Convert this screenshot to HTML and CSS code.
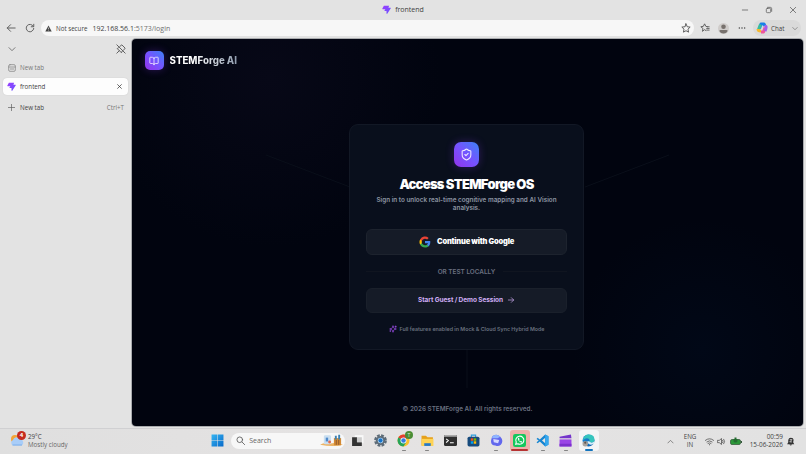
FILE: index.html
```html
<!DOCTYPE html>
<html lang="en">
<head>
    <meta charset="UTF-8" />
    <meta name="viewport" content="width=device-width, initial-scale=1.0"/>
    <title>frontend</title>
    <link rel="stylesheet" href="styles.css">
</head>
<body>
    <svg width="0" height="0" class="defs">
        <defs>
            <linearGradient id="bolt" x1="0" y1="0" x2="1" y2="1"><stop offset="0" stop-color="#9b3dff"/><stop offset="1" stop-color="#6a55ff"/></linearGradient>
            <linearGradient id="win" x1="0" y1="0" x2="1" y2="1"><stop offset="0" stop-color="#35b5f2"/><stop offset="1" stop-color="#0869c9"/></linearGradient>
            <linearGradient id="edge" x1="0" y1="0" x2="1" y2="1"><stop offset="0" stop-color="#1b8fe0"/><stop offset="1" stop-color="#0d5ba8"/></linearGradient>
            <symbol id="logo" viewBox="0 0 24 24"><path fill="url(#bolt)" d="M5 2h14l-2 5h6q1 1 0 2L14 23h-2v-7H7q-1-1 0-2l2-3H2q-2-1-1-2z"/></symbol>
        </defs>
    </svg>

    <header class="titlebar">
        <div class="title"><svg class="i9"><use href="#logo"/></svg><span>frontend</span></div>
        <div class="window-buttons">
            <svg class="i8 line" viewBox="0 0 24 24"><path d="M4 12h16"/></svg>
            <svg class="i8 line" viewBox="0 0 24 24"><rect x="4" y="7" width="13" height="13" rx="3"/><path d="M8 4h8q4 0 4 4v8"/></svg>
            <svg class="i8 line" viewBox="0 0 24 24"><path d="M4 4l16 16M20 4L4 20"/></svg>
        </div>
    </header>

    <nav class="toolbar">
        <svg class="i10 line back" viewBox="0 0 24 24"><path d="M22 12H3M11 4l-8 8 8 8"/></svg>
        <svg class="i10 line reload" viewBox="0 0 24 24"><path d="M20 8a9 9 0 1 0 1 5M21 3v6h-6"/></svg>
        <div class="address">
            <svg class="warn" viewBox="0 0 24 24"><path fill="#444" d="M12 2l11 20H1z"/><path stroke="#f7f7f7" stroke-width="2" d="M12 9v6M12 17v2"/></svg>
            <span class="secure">Not secure</span>
            <span class="url">192.168.56.1<em>:5173/login</em></span>
            <svg class="i10 line star" viewBox="0 0 24 24"><path d="M12 2l3 7 7 .8-5.300 5 1.500 7.200L12 18.500 5.800 22l1.500-7.200L2 9.800 9 9z"/></svg>
        </div>
        <svg class="i10 line fav" viewBox="0 0 24 24"><path d="M14 18l-3-2-5 4 1-7-5-4 6-1 3-6 3 6 4 1M16 13h6M16 17h6M18 9h4"/></svg>
        <svg class="avatar" viewBox="0 0 24 24"><circle cx="12" cy="12" r="12" fill="#cfccca"/><circle cx="12" cy="8" r="5" fill="#77716d"/><path d="M3 17q0-2 3-2h12q3 0 3 2-2 6-9 6t-9-6" fill="#77716d"/></svg>
        <svg class="dots" viewBox="0 0 24 24"><g fill="#444"><circle cx="4" cy="12" r="2.200"/><circle cx="12" cy="12" r="2.200"/><circle cx="20" cy="12" r="2.200"/></g></svg>
        <div class="chat">
            <svg class="i12" viewBox="0 0 24 24" fill="none" stroke-width="6" stroke-linejoin="round"><path stroke="#187fe7" d="M7 13l3-9h6l2 4"/><path stroke="#36bd9d" d="M9 5L5 15"/><path stroke="#f5b82e" d="M4 14q0 4 6 4"/><path stroke="#f0569a" d="M10 20h5l3-9"/><path stroke="#a45bea" d="M17 9h3q1 3-2 9"/></svg>
            <span>Chat</span>
            <svg class="i7 line" viewBox="0 0 24 24"><path d="M3 8l9 9 9-9"/></svg>
        </div>
    </nav>

    <main class="browser">
        <aside class="tabs">
            <div class="tabs-head">
                <svg class="i8 line" viewBox="0 0 24 24"><path d="M3 8l9 9 9-9"/></svg>
                <svg class="i10 line" viewBox="0 0 24 24"><path d="M2 2l20 20M2 22l6-6M9 6l5-4 8 8-4 5M6 9l-3 2 10 10 2-4"/></svg>
            </div>
            <div class="tab muted">
                <svg class="i8 line" viewBox="0 0 24 24"><rect x="2" y="2" width="20" height="20" rx="4"/><path d="M2 9h20M7 15h10"/></svg>
                <span>New tab</span>
            </div>
            <div class="tab active">
                <svg class="i9"><use href="#logo"/></svg>
                <span>frontend</span>
                <svg class="close line" viewBox="0 0 24 24"><path d="M3 3l18 18M21 3L3 21"/></svg>
            </div>
            <div class="tab new">
                <svg class="i7 line" viewBox="0 0 24 24"><path d="M12 1v22M1 12h22"/></svg>
                <span>New tab</span>
                <small>Ctrl+T</small>
            </div>
        </aside>

        <section class="page">
            <svg class="lines" viewBox="0 0 671 387"><path d="M134 116l84 32M537 116l-84 32M335 311v38"/></svg>
            <div class="brand">
                <div class="badge"><svg class="i10 lucide" viewBox="0 0 24 24"><path d="M12 7v14M3 18a1 1 0 0 1-1-1V4a1 1 0 0 1 1-1h5a4 4 0 0 1 4 4 4 4 0 0 1 4-4h5a1 1 0 0 1 1 1v13a1 1 0 0 1-1 1h-6a3 3 0 0 0-3 3 3 3 0 0 0-3-3z"/></svg></div>
                <span>STEMForge AI</span>
            </div>

            <div class="card">
                <div class="badge large"><svg class="i13 lucide" viewBox="0 0 24 24"><path d="M20 13c0 5-3.500 7.500-7.660 8.950a1 1 0 0 1-.67-.01C7.500 20.500 4 18 4 13V6a1 1 0 0 1 1-1c2 0 4.500-1.200 6.240-2.720a1.170 1.170 0 0 1 1.520 0C14.510 3.810 17 5 19 5a1 1 0 0 1 1 1z"/><path d="m9 12 2 2 4-4"/></svg></div>
                <h1>Access STEMForge OS</h1>
                <p class="lead">Sign in to unlock real-time cognitive mapping and AI Vision<br>analysis.</p>
                <button class="google">
                    <svg class="i10g" viewBox="0 0 24 24"><path fill="#4285f4" d="M22.560 12.250c0-.78-.07-1.530-.2-2.250H12v4.260h5.920a5.060 5.060 0 0 1-2.200 3.320v2.770h3.570c2.080-1.920 3.270-4.740 3.270-8.100z"/><path fill="#34a853" d="M12 23c2.970 0 5.460-.98 7.280-2.660l-3.570-2.770c-.98.66-2.230 1.060-3.710 1.060-2.860 0-5.290-1.930-6.160-4.530H2.180v2.840A11 11 0 0 0 12 23z"/><path fill="#fbbc05" d="M5.840 14.090a6.600 6.600 0 0 1 0-4.180V7.070H2.180a11 11 0 0 0 0 9.860z"/><path fill="#ea4335" d="M12 5.380c1.620 0 3.060.56 4.210 1.640l3.150-3.150A11 11 0 0 0 2.180 7.070l3.660 2.840C6.710 7.310 9.140 5.380 12 5.380z"/></svg>
                    <span>Continue with Google</span>
                </button>
                <div class="divider"><span>OR TEST LOCALLY</span></div>
                <button class="guest">
                    <span>Start Guest / Demo Session</span>
                    <svg class="i8 lucide" viewBox="0 0 24 24"><path d="M4 12h16M13 5l7 7-7 7"/></svg>
                </button>
                <div class="hint">
                    <svg class="i8 lucide" viewBox="0 0 24 24"><path d="M9.940 15.500A2 2 0 0 0 8.500 14.060l-6.140-1.580a.5.5 0 0 1 0-.96L8.500 9.940A2 2 0 0 0 9.940 8.500l1.580-6.140a.5.5 0 0 1 .96 0L14.060 8.500a2 2 0 0 0 1.440 1.440l6.140 1.580a.5.5 0 0 1 0 .96L15.500 14.060a2 2 0 0 0-1.440 1.440l-1.580 6.140a.5.5 0 0 1-.96 0z"/><path d="M20 3v4M22 5h-4M4 17v2M5 18H3"/></svg>
                    <span>Full features enabled in Mock &amp; Cloud Sync Hybrid Mode</span>
                </div>
            </div>

            <footer>© 2026 STEMForge AI. All rights reserved.</footer>
        </section>
    </main>

    <div class="taskbar">
        <div class="weather">
            <svg class="cloud" viewBox="0 0 30 30"><circle cx="10" cy="14" r="8" fill="#f3a536"/><path d="M6 27a6 6 0 0 1 0-11 7 7 0 0 1 13-2 7 7 0 0 1 4 13z" fill="#a9cdf8"/><path d="M5 26h19" stroke="#7caeea" stroke-width="2"/></svg>
            <b class="count">4</b>
            <div><div class="temp">29°C</div><div class="sky">Mostly cloudy</div></div>
        </div>

        <div class="apps">
            <div class="app"><svg viewBox="0 0 24 24"><path fill="url(#win)" d="M1 1h10.500v10.500H1zM12.500 1H23v10.500H12.500zM1 12.500h10.500V23H1zM12.500 12.500H23V23H12.500z"/></svg></div>
            <div class="search">
                <svg class="i9 line" viewBox="0 0 24 24"><circle cx="10" cy="10" r="7.500"/><path d="M16 16l7 7"/></svg>
                <span>Search</span>
                <svg class="art" viewBox="0 0 48 26"><path d="M0 22q10-6 20-2 14-4 28 2-20 5-48 0" fill="#edb363"/><rect x="8" y="2" width="15" height="19" rx="3" fill="#c9def0"/><path d="M12 7h5v8h-5z" fill="#4f8acb"/><circle cx="20" cy="16" r="3" fill="#e46a4c"/><path d="M29 8h15v15H29z" fill="#d38a34"/><path d="M31 3h4v8h-4zM38 1h4v10h-4z" fill="#3d81b2"/><path d="M34 12v10M39 12v10" stroke="#8f5930" stroke-width="2"/></svg>
            </div>
            <div class="app"><svg viewBox="0 0 24 24"><rect x="7" y="2" width="16" height="15" fill="#f8f8f8"/><path d="M2 6h9v9h9v7H2z" fill="#333"/><path d="M11 6h9v9h-9z" fill="#ccc"/></svg></div>
            <div class="app"><svg viewBox="0 0 24 24"><circle cx="12" cy="12" r="9.500" fill="none" stroke="#5d6b77" stroke-width="4.500" stroke-dasharray="5 2.460"/><circle cx="12" cy="12" r="8.500" fill="#5d6b77"/><circle cx="12" cy="12" r="5" fill="#cce8fc"/><circle cx="12" cy="12" r="4" fill="#1874c9"/></svg></div>
            <div class="app run"><svg viewBox="0 0 24 24"><circle cx="12" cy="12" r="11" fill="#fbc02d"/><path d="M12 12L2.500 6.500A11 11 0 0 1 21.500 6.500z" fill="#e33e32"/><path d="M12 12L2.500 6.500A11 11 0 0 0 12 23l5-8z" fill="#25a45a"/><circle cx="12" cy="12" r="5.500" fill="#fff"/><circle cx="12" cy="12" r="4.200" fill="#347ce0"/></svg><b class="profile">T</b></div>
            <div class="app run"><svg viewBox="0 0 24 24"><path d="M1 3h8l3 3h10v15H1z" fill="#e6a11b"/><path d="M1 9h22v13H1z" fill="#ffd354"/><path d="M6 17h12v5H6z" fill="#2578ca"/></svg></div>
            <div class="app"><svg viewBox="0 0 24 24"><rect x="0" y="2" width="24" height="20" rx="2" fill="#303030"/><path d="M0 5V4q0-2 2-2h20q2 0 2 2v1z" fill="#aaa"/><path d="M4 9l4 3-4 4M11 16h7" fill="none" stroke="#fff" stroke-width="2"/></svg></div>
            <div class="app"><svg viewBox="0 0 24 24"><path d="M8 6V2h8v4" fill="none" stroke="#2b9ddd" stroke-width="2"/><rect x="1" y="5" width="22" height="18" rx="3" fill="#174a7c"/><path d="M7 8h4.500v4.500H7z" fill="#f25022"/><path d="M12.500 8H17v4.500h-4.500z" fill="#7fba00"/><path d="M7 13.500h4.500V18H7z" fill="#00a4ef"/><path d="M12.500 13.500H17V18h-4.500z" fill="#ffb900"/></svg></div>
            <div class="app run"><svg viewBox="0 0 24 24"><path d="M4 4q8-6 15 1 7 7 1 15-5 4-10 1Q1 21 2 12z" fill="#6267ed"/><path d="M4 4q8-6 15 1l-5 3H4z" fill="#8fb5ff"/><path d="M6 9l11 2-2 6-8-2z" fill="#d5d8ff"/></svg></div>
            <div class="app alert"><svg viewBox="0 0 24 24"><rect width="24" height="24" rx="4" fill="#16c75c"/><path d="M5 19l1-4a7.500 7.500 0 1 1 3 3z" fill="none" stroke="#fff" stroke-width="2"/><path d="M9 8q0 6 7 8l1-2-3-1-1 1-2-3 1-1-1-3z" fill="#fff"/></svg></div>
            <div class="app run"><svg viewBox="0 0 24 24"><path d="M17 1l6 3v16l-6 3L7 14l-4 3-2-2 4-3-4-3 2-2 4 3zM17 7l-6 5 6 5z" fill="#1685d1" fill-rule="evenodd"/><path d="M17 1l6 3v16l-6 3z" fill="#36a8ef"/></svg></div>
            <div class="app run"><svg viewBox="0 0 24 24"><path d="M1 5l21-4 1 7H1z" fill="#7434cb"/><path d="M1 10h22v13H1z" fill="#9a45e6"/><path d="M1 18h22v5H1z" fill="#7c31cc"/></svg></div>
            <div class="app current"><svg viewBox="0 0 24 24"><circle cx="12" cy="12" r="11" fill="url(#edge)"/><path d="M2 9Q5 1 12 1q11 0 11 10 0 5-6 5-4 0-3-3 0-5-5-5-4 0-7 3z" fill="#35c5bd"/><path d="M10 13q0 6 6 7 3 0 6-2l1-4q-6 4-9 0z" fill="#d9eff9"/><circle cx="6" cy="18" r="5" fill="#a8a29c"/><circle cx="6" cy="16" r="2" fill="#5d5551"/></svg></div>
        </div>

        <div class="tray">
            <svg class="i7 line up" viewBox="0 0 24 24"><path d="M3 17l9-9 9 9"/></svg>
            <div class="lang">ENG<br>IN</div>
            <svg class="i9 line wifi" viewBox="0 0 24 24"><path d="M1 9q11-9 22 0M5 13q7-6 14 0M8 17q4-3 8 0M12 20v1"/></svg>
            <svg class="i9 line sound" viewBox="0 0 24 24"><path d="M2 9h4l6-5v16l-6-5H2zM15 9q3 3 0 6M18 6q5 6 0 12"/></svg>
            <svg class="battery" viewBox="0 0 24 16"><rect x="1" y="4" width="20" height="10" rx="3" fill="#2c9839" stroke="#34583a" stroke-width="1.500"/><path d="M22 7h2v4h-2z" fill="#34583a"/><path d="M9 0v3H7v4q0 3 4 3t4-3V3h-2V0" fill="#246d30"/></svg>
            <div class="clock">00:59<br>15-06-2026</div>
            <svg class="i9 bell" viewBox="0 0 24 24"><path d="M3 19l3-5V8q1-6 7-6 8 0 7 7l-1 5 3 5zM9 20h7q-3 5-7 0" fill="#333"/><path d="M10 7h6l-6 6h6" fill="none" stroke="#ddd" stroke-width="2"/></svg>
        </div>
    </div>
</body>
</html>
```
FILE: styles.css
```css
* {
    box-sizing: border-box;
}
body {
    margin: 0;
    width: 806px;
    height: 454px;
    overflow: hidden;
    display: grid;
    grid-template-rows: 19px 20px 387px 28px;
    background: #e3e3e3;
    color: #424242;
    font-family: 'Open Sans', 'Noto Sans', sans-serif;
    font-size: 6.2px;
    white-space: nowrap;
}
svg {
    display: block;
    flex: none;
}
.defs { position: absolute; }
.i7 { width: 7px; height: 7px; }
.i8 { width: 8px; height: 8px; }
.i9 { width: 9px; height: 9px; }
.i10 { width: 10px; height: 10px; }
.i10g { width: 12px; height: 12px; }
.i12 { width: 12px; height: 12px; }
.i13 { width: 13px; height: 13px; }
.line {
    fill: none;
    stroke: #5c5c5c;
    stroke-width: 2.3;
    stroke-linecap: round;
    stroke-linejoin: round;
}
.lucide {
    fill: none;
    stroke: currentColor;
    stroke-width: 2;
    stroke-linecap: round;
    stroke-linejoin: round;
}

/* browser chrome */
.titlebar {
    display: grid;
    grid-template-columns: 1fr auto 1fr;
    align-items: center;
}
.title {
    grid-column: 2;
    display: flex;
    gap: 4px;
    align-items: center;
    font-size: 7px;
}
.window-buttons {
    display: flex;
    justify-content: flex-end;
    gap: 16px;
    padding-right: 9px;
}
.window-buttons svg { width: 8px; }
.toolbar {
    display: flex;
    align-items: center;
    height: 18px;
    padding-left: 6px;
}
.reload { margin-left: 9px; }
.address {
    display: flex;
    align-items: center;
    width: 653px;
    height: 16px;
    margin-left: 6px;
    padding: 0 3px 0 4px;
    border-radius: 8px;
    background: #f7f7f7;
}
.warn { width: 7px; height: 7px; }
.secure { margin-left: 4px; }
.url { margin-left: 5px; font-size: 7px; }
.url em { font-style: normal; color: #707070; }
.star { margin-left: auto; }
.fav { margin-left: 6px; }
.avatar { width: 11px; height: 11px; margin-left: 8px; }
.dots { width: 8px; height: 8px; margin-left: 9px; }
.chat {
    display: flex;
    align-items: center;
    width: 48px;
    height: 16px;
    margin-left: 7px;
    padding: 0 3px 0 3px;
    border-radius: 8px;
    background: #dadada;
}
.chat span { margin-left: 3px; }
.chat .i7 { width: 6px; margin-left: auto; }
.browser {
    display: grid;
    grid-template-columns: 132px 671px;
}
.tabs-head {
    display: flex;
    justify-content: space-between;
    align-items: center;
    height: 20px;
    padding: 0 6px 0 8px;
}
.tab {
    display: flex;
    align-items: center;
    height: 17px;
    margin: 0 4px 0 3px;
    padding: 0 5px;
}
.tab span { margin-left: 4px; }
.muted { color: #777; }
.muted .line { stroke: #888; }
.active {
    margin-top: 2px;
    padding: 0 6px 0 4px;
    border-radius: 4px;
    background: #fdfdfd;
    box-shadow: 0 0 1px #bbb;
}
.close { width: 5px; height: 5px; margin-left: auto; stroke: #333; stroke-width: 3.5; }
.new { margin-top: 4px; padding-right: 4px; }
.new span { margin-left: 5px; }
.new small { margin-left: auto; color: #777; font-size: 6.2px; }

/* login page */
.page {
    position: relative;
    display: flex;
    flex-direction: column;
    align-items: center;
    overflow: hidden;
    border-radius: 4px;
    background:
        radial-gradient(circle at 138px 38px, #070817 0, transparent 170px),
        radial-gradient(circle at 570px 310px, #010817 0, transparent 130px),
        #01040f;
    box-shadow: 0 0 0 1px #a9abae;
    font-family: Inter, sans-serif;
}
.lines {
    position: absolute;
    inset: 0;
    fill: none;
    stroke: #0a0f1a;
    stroke-width: 1;
}
.brand {
    display: flex;
    align-self: flex-start;
    align-items: center;
    gap: 6px;
    height: 19px;
    margin: 12px 0 0 12.5px;
    font-size: 9.7px;
    font-weight: 800;
}
.brand span {
    background: linear-gradient(90deg, #fff 35%, #8f9bad);
    background-clip: text;
    color: transparent;
}
.badge {
    display: grid;
    place-items: center;
    width: 19px;
    height: 19px;
    border-radius: 5px;
    background: linear-gradient(45deg, #9333ea, #7653ff 50%, #3b82f6);
    box-shadow: 0 0 9px rgba(137,56,246,0.3);
    color: #eee8ff;
}
.card {
    position: relative;
    display: flex;
    flex-direction: column;
    align-items: center;
    width: 235px;
    height: 226px;
    margin: 54px 2px 0 0;
    padding: 16.5px 16px 0;
    border: 1px solid #121825;
    border-radius: 9px;
    background: #090f1c;
}
.large { width: 25px; height: 25px; border-radius: 7px; }
h1 {
    margin: 9px 0 0;
    color: #fff;
    font-size: 13px;
    line-height: 16px;
    font-weight: 900;
    letter-spacing: -0.7px;
}
.lead {
    margin: 4px 0 0;
    color: #8e96a4;
    font-size: 6.35px;
    line-height: 8.5px;
    font-weight: 600;
    text-align: center;
}
button {
    display: flex;
    align-items: center;
    justify-content: center;
    width: 201px;
    padding: 0;
    border: 1px solid #1d232e;
    border-radius: 6px;
    background: #151b27;
    font-family: inherit;
}
.google {
    gap: 6px;
    height: 26px;
    margin-top: 16px;
    color: #fff;
    font-size: 7.5px;
    font-weight: 900;
    letter-spacing: -0.2px;
}
.divider {
    display: flex;
    align-items: center;
    gap: 8px;
    width: 201px;
    height: 10px;
    margin-top: 12px;
    color: #697080;
    font-size: 6.4px;
    font-weight: 600;
}
.divider::before, .divider::after {
    content: '';
    flex: 1;
    height: 1px;
    background: #101520;
}
.guest {
    gap: 4px;
    height: 25px;
    margin-top: 11px;
    border-color: #1a202b;
    color: #d0aef5;
    font-size: 6.5px;
    font-weight: 700;
    letter-spacing: -0.07px;
}
.hint {
    display: flex;
    align-items: center;
    gap: 3px;
    height: 8px;
    margin-top: 12px;
    color: #686f7e;
    font-size: 5.3px;
    font-weight: 600;
}
.hint svg { color: #a855f7; }
footer {
    margin-top: 54.5px;
    color: #697080;
    font-size: 6.33px;
    line-height: 9px;
    font-weight: 600;
}

/* windows taskbar */
.taskbar {
    display: grid;
    grid-template-columns: 206px 395px 1fr;
    height: 26px;
    margin-top: 2px;
    border-top: 1px solid #d0d0d2;
    background: linear-gradient(90deg, #dfdfdf, #e5e3e3 45%, #e2e2e2);
}
.weather {
    position: relative;
    display: flex;
    gap: 3px;
    padding: 3px 0 0 10px;
}
.cloud { width: 15px; height: 15px; }
.count {
    position: absolute;
    left: 17px;
    top: 2px;
    width: 9px;
    height: 9px;
    border-radius: 50%;
    background: #c52b1e;
    color: #fff;
    font-size: 6px;
    line-height: 9px;
    text-align: center;
}
.temp { line-height: 9px; }
.sky { line-height: 8px; color: #666; }
.apps {
    display: flex;
    align-items: center;
    height: 23px;
}
.app {
    position: relative;
    display: grid;
    place-items: center;
    width: 20px;
    height: 21px;
    margin: 0 1.57px;
    border-radius: 3px;
}
.app svg { width: 13px; height: 13px; }
.run::after, .alert::after, .current::after {
    content: '';
    position: absolute;
    bottom: 0;
    width: 4px;
    height: 1.5px;
    border-radius: 1px;
    background: #858585;
}
.alert { background: #efb1ab; }
.alert::after { width: 17px; height: 2px; background: #b73333; }
.current { background: #f4f5f6; }
.current::after { width: 8px; height: 2px; background: #1474bd; }
.profile {
    position: absolute;
    right: 1px;
    top: 1px;
    width: 8px;
    height: 8px;
    border-radius: 50%;
    background: #4a8d35;
    color: #dcebd5;
    font-size: 5px;
    line-height: 8px;
    font-weight: 400;
    text-align: center;
}
.search {
    display: flex;
    align-items: center;
    width: 114px;
    height: 16px;
    margin: 0 1px 0 2px;
    padding: 0 2px 0 5px;
    border-radius: 8px;
    background: #f7f7f7;
    color: #666;
    font-size: 7px;
}
.search span { margin-left: 4px; }
.art { width: 23px; height: 13px; margin-left: auto; }
.tray {
    display: flex;
    align-items: center;
    height: 24px;
    padding-left: 66px;
    line-height: 8px;
}
.lang { width: 14px; margin-left: 9px; text-align: center; }
.wifi { margin-left: 8px; }
.sound { margin-left: 3px; }
.battery { width: 12px; height: 9px; margin-left: 4px; }
.clock { width: 34px; margin-left: 7px; text-align: right; font-size: 6.4px; }
.bell { margin-left: 3px; }
```
